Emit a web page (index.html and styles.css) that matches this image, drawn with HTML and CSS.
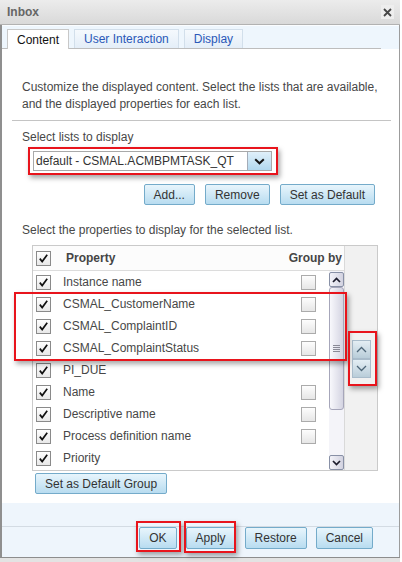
FILE: index.html
```html
<!DOCTYPE html>
<html>
<head>
<meta charset="utf-8">
<link rel="stylesheet" href="styles.css">
</head>
<body>
<div class="window">
  <div class="titlebar">
    <span class="title">Inbox</span>
    <span class="close"><svg width="9" height="9" viewBox="0 0 9 9"><path d="M1 1L8 8M8 1L1 8" stroke="#474747" stroke-width="1.8" fill="none"/></svg></span>
  </div>
  <div class="frame">
    <div class="tabstrip">
      <div class="tabs">
        <div class="tab active">Content</div>
        <div class="tab">User Interaction</div>
        <div class="tab">Display</div>
      </div>
    </div>
    <div class="panel">
      <p class="desc">Customize the displayed content. Select the lists that are available,<br>and the displayed properties for each list.</p>
      <div class="rule"></div>
      <div class="label">Select lists to display</div>
      <div class="select">
        <span class="select-text">default - CSMAL.ACMBPMTASK_QT</span>
        <span class="select-btn"><svg width="11" height="7" viewBox="0 0 11 7"><path d="M1.2 1.2L5.5 5.3L9.8 1.2" stroke="#151515" stroke-width="2" fill="none"/></svg></span>
      </div>
      <div class="btnrow">
        <button class="btn">Add...</button>
        <button class="btn">Remove</button>
        <button class="btn">Set as Default</button>
      </div>
      <div class="label label2">Select the properties to display for the selected list.</div>
      <div class="table">
        <div class="list">
          <div class="head">
            <span class="cb"><svg width="11" height="11" viewBox="0 0 11 11"><path d="M1.8 5.6L4.2 8.6L9.2 1.8" stroke="#111" stroke-width="1.7" fill="none"/></svg></span>
            <span class="hname">Property</span>
            <span class="hgroup">Group by</span>
          </div>
          <div class="listbody">
            <div class="rows">
              <div class="row"><span class="cb"><svg width="11" height="11" viewBox="0 0 11 11"><path d="M1.8 5.6L4.2 8.6L9.2 1.8" stroke="#111" stroke-width="1.7" fill="none"/></svg></span><span class="name">Instance name</span><span class="gcb"></span></div>
              <div class="row"><span class="cb"><svg width="11" height="11" viewBox="0 0 11 11"><path d="M1.8 5.6L4.2 8.6L9.2 1.8" stroke="#111" stroke-width="1.7" fill="none"/></svg></span><span class="name">CSMAL_CustomerName</span><span class="gcb"></span></div>
              <div class="row"><span class="cb"><svg width="11" height="11" viewBox="0 0 11 11"><path d="M1.8 5.6L4.2 8.6L9.2 1.8" stroke="#111" stroke-width="1.7" fill="none"/></svg></span><span class="name">CSMAL_ComplaintID</span><span class="gcb"></span></div>
              <div class="row"><span class="cb"><svg width="11" height="11" viewBox="0 0 11 11"><path d="M1.8 5.6L4.2 8.6L9.2 1.8" stroke="#111" stroke-width="1.7" fill="none"/></svg></span><span class="name">CSMAL_ComplaintStatus</span><span class="gcb"></span></div>
              <div class="row"><span class="cb"><svg width="11" height="11" viewBox="0 0 11 11"><path d="M1.8 5.6L4.2 8.6L9.2 1.8" stroke="#111" stroke-width="1.7" fill="none"/></svg></span><span class="name">PI_DUE</span><span class="gcb none"></span></div>
              <div class="row"><span class="cb"><svg width="11" height="11" viewBox="0 0 11 11"><path d="M1.8 5.6L4.2 8.6L9.2 1.8" stroke="#111" stroke-width="1.7" fill="none"/></svg></span><span class="name">Name</span><span class="gcb"></span></div>
              <div class="row"><span class="cb"><svg width="11" height="11" viewBox="0 0 11 11"><path d="M1.8 5.6L4.2 8.6L9.2 1.8" stroke="#111" stroke-width="1.7" fill="none"/></svg></span><span class="name">Descriptive name</span><span class="gcb"></span></div>
              <div class="row"><span class="cb"><svg width="11" height="11" viewBox="0 0 11 11"><path d="M1.8 5.6L4.2 8.6L9.2 1.8" stroke="#111" stroke-width="1.7" fill="none"/></svg></span><span class="name">Process definition name</span><span class="gcb"></span></div>
              <div class="row"><span class="cb"><svg width="11" height="11" viewBox="0 0 11 11"><path d="M1.8 5.6L4.2 8.6L9.2 1.8" stroke="#111" stroke-width="1.7" fill="none"/></svg></span><span class="name">Priority</span><span class="gcb none"></span></div>
            </div>
            <div class="vscroll">
              <span class="sb-btn"><svg width="9" height="6" viewBox="0 0 9 6"><path d="M1 5L4.5 1.5L8 5" stroke="#1c1c2c" stroke-width="1.7" fill="none"/></svg></span>
              <span class="thumb"><svg width="7" height="7" viewBox="0 0 7 7"><path d="M0 0.5H7M0 2.5H7M0 4.5H7M0 6.5H7" stroke="#8a8a96" stroke-width="1"/></svg></span>
              <span class="track"></span>
              <span class="sb-btn"><svg width="9" height="6" viewBox="0 0 9 6"><path d="M1 1L4.5 4.5L8 1" stroke="#1c1c2c" stroke-width="1.7" fill="none"/></svg></span>
            </div>
          </div>
        </div>
        <div class="side">
          <span class="sbtn"><svg width="11" height="7" viewBox="0 0 11 7"><path d="M1 6L5.5 1.5L10 6" stroke="#4e6678" stroke-width="1.3" fill="none"/></svg></span>
          <span class="sbtn"><svg width="11" height="7" viewBox="0 0 11 7"><path d="M1 1L5.5 5.5L10 1" stroke="#4e6678" stroke-width="1.3" fill="none"/></svg></span>
        </div>
      </div>
      <button class="btn groupbtn">Set as Default Group</button>
    </div>
    <div class="footer">
      <div class="btnbar">
        <button class="btn fbtn">OK</button>
        <button class="btn fbtn">Apply</button>
        <button class="btn fbtn">Restore</button>
        <button class="btn fbtn">Cancel</button>
      </div>
    </div>
  </div>
  <div class="bottom"></div>

  <div class="hl hl-select"></div>
  <div class="hl hl-rows"></div>
  <div class="hl hl-arrows"></div>
  <div class="hl hl-ok"></div>
  <div class="hl hl-apply"></div>
</div>
</body>
</html>
```
FILE: styles.css
```css
* { box-sizing: border-box; }
html, body { margin: 0; padding: 0; background: #fff; }
body {
  font-family: "Liberation Sans", Arial, sans-serif;
  font-size: 12px;
  color: #474747;
}
.window {
  position: relative;
  width: 400px;
  height: 562px;
  display: flex;
  flex-direction: column;
  overflow: hidden;
  background: #eef5fc;
}
.titlebar {
  height: 25px;
  flex: none;
  display: flex;
  align-items: center;
  justify-content: space-between;
  padding: 0 6px 0 7px;
  background: linear-gradient(#ececec, #d9d9d9);
  border-bottom: 1px solid #b2b2b2;
}
.title { font-weight: bold; font-size: 12px; color: #666; }
.close {
  width: 13px;
  height: 14px;
  background: #eeeeee;
  display: flex;
  align-items: center;
  justify-content: center;
}
.frame {
  flex: 1;
  display: flex;
  flex-direction: column;
  border-left: 2px solid #8f8f8f;
  border-right: 1px solid #9c9c9c;
}
.tabstrip {
  flex: none;
  padding-top: 3px;
  background: #eef6fd;
  border-top: 1px solid #fbfdff;
}
.tabs {
  display: flex;
  align-items: flex-end;
  gap: 5px;
  padding-left: 5px;
  margin-right: 18px;
  border-bottom: 1px solid #bdbdbd;
}
.tab {
  height: 19px;
  padding: 0 9px;
  display: flex;
  align-items: center;
  color: #2a58b8;
  background: linear-gradient(#f5f9fd, #e4eef8);
  border: 1px solid #d2dfeb;
  border-bottom: none;
}
.tab.active {
  color: #111;
  background: #fff;
  border-color: #c8c8c8;
  height: 20px;
  margin-bottom: -1px;
}
.panel {
  flex: none;
  background: #fff;
  padding: 30px 12px 9px 20px;
}
.desc { margin: 0; line-height: 17px; white-space: nowrap; }
.rule { height: 1px; background: #c4c4c4; margin: 7px -4px 0 -10px; }
.label { line-height: 17px; margin-top: 8px; white-space: nowrap; }
.label2 { margin-top: 17px; }
.select {
  margin: 5px 0 0 11px;
  width: 239px;
  height: 20px;
  display: flex;
  border: 1px solid #a9a9a9;
  background: #fff;
}
.select-text { flex: 1; padding-left: 2px; line-height: 18px; color: #333; white-space: nowrap; }
.select-btn {
  width: 24px;
  border-left: 1px solid #a4acb8;
  background: linear-gradient(#e0f0fa, #b2d8ee);
  display: flex;
  align-items: center;
  justify-content: center;
}
.btnrow {
  display: flex;
  justify-content: flex-end;
  gap: 10px;
  margin: 13px 12px 0 0;
}
.btn {
  height: 21px;
  padding: 0 9px;
  margin: 0;
  border: 1px solid #74abca;
  border-radius: 2px;
  background: linear-gradient(#e8f5fc, #b8dcf0);
  color: #333;
  font: 12px "Liberation Sans", Arial, sans-serif;
  display: flex;
  align-items: center;
  white-space: nowrap;
}
.table {
  margin: 6px 0 0 10px;
  width: 346px;
  height: 226px;
  border: 1px solid #cacaca;
  display: flex;
}
.list { width: 311px; display: flex; flex-direction: column; }
.head {
  height: 25px;
  flex: none;
  display: flex;
  align-items: center;
  padding: 0 2px 0 3px;
  border-bottom: 1px solid #dcdcdc;
  background: #fcfcfc;
  font-weight: bold;
  color: #454545;
}
.hname { flex: 1; margin-left: 15px; }
.listbody { flex: 1; display: flex; }
.rows { flex: 1; }
.row {
  height: 22px;
  display: flex;
  align-items: center;
  padding: 0 13px 0 3px;
}
.name { flex: 1; margin-left: 12px; white-space: nowrap; }
.cb {
  width: 15px;
  height: 15px;
  border: 1px solid #8a8a8a;
  background: linear-gradient(#ffffff, #e8e8e8);
  display: flex;
  align-items: center;
  justify-content: center;
}
.gcb {
  width: 15px;
  height: 15px;
  border: 1px solid #ababab;
  background: linear-gradient(#fdfdfd, #e6e6e6);
}
.gcb.none { visibility: hidden; }
.vscroll {
  width: 15px;
  display: flex;
  flex-direction: column;
  background: #f4f4f9;
  padding-top: 1px;
}
.sb-btn {
  height: 15px;
  flex: none;
  border: 1px solid #8890a6;
  border-radius: 2px;
  background: linear-gradient(90deg, #f3f3f9, #d2d2e0);
  display: flex;
  align-items: center;
  justify-content: center;
}
.thumb {
  height: 123px;
  flex: none;
  border: 1px solid #a6a6ba;
  border-radius: 3px;
  background: linear-gradient(90deg, #f8f8fc, #d4d4e2);
  display: flex;
  align-items: center;
  justify-content: center;
}
.track { flex: 1; }
.side {
  flex: 1;
  border-left: 1px solid #d9d9d9;
  background: #f1f1f1;
  padding: 94px 0 0 7px;
  display: flex;
  flex-direction: column;
}
.sbtn {
  width: 19px;
  height: 19px;
  border: 1px solid #a9bccb;
  background: linear-gradient(#e4eef4, #b9cdd9);
  display: flex;
  align-items: center;
  justify-content: center;
}
.groupbtn { margin: 2px 0 0 13px; }
.footer {
  flex: 1;
  padding-top: 23px;
  background: #eef5fc;
}
.btnbar {
  border-top: 1px solid #d3dbe3;
  display: flex;
  justify-content: flex-end;
  gap: 9px;
  padding-right: 26px;
}
.fbtn { height: 22px; }
.bottom {
  height: 5px;
  flex: none;
  border-top: 1px solid #8d8d8d;
  background: #e3e3e3;
}
.hl {
  position: absolute;
  border: 2px solid #e8141c;
  box-shadow: 2px 3px 5px rgba(0, 0, 0, 0.35);
  pointer-events: none;
}
.hl-select { left: 28px; top: 147px; width: 250px; height: 28px; }
.hl-rows { left: 14px; top: 292px; width: 333px; height: 69px; }
.hl-arrows { left: 348px; top: 331px; width: 29px; height: 55px; }
.hl-ok { left: 136px; top: 521px; width: 45px; height: 31px; }
.hl-apply { left: 184px; top: 521px; width: 52px; height: 32px; }
```
